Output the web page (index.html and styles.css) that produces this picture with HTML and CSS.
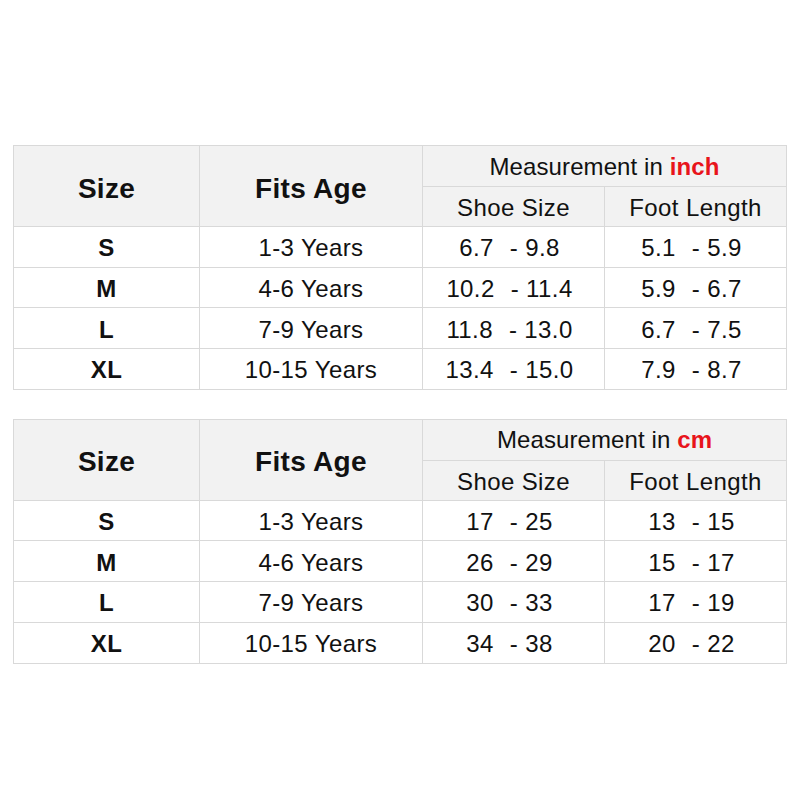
FILE: index.html
```html
<!DOCTYPE html>
<html>
<head>
<meta charset="utf-8">
<link rel="stylesheet" href="styles.css">
</head>
<body>
<div class="page">
  <table class="chart">
    <colgroup><col class="c1"><col class="c2"><col class="c3"><col class="c4"></colgroup>
    <tr class="h1">
      <th rowspan="2" class="big">Size</th>
      <th rowspan="2" class="big">Fits Age</th>
      <th colspan="2" class="meas">Measurement in <b class="red">inch</b></th>
    </tr>
    <tr class="h2"><th class="sub">Shoe Size</th><th class="sub">Foot Length</th></tr>
    <tr><td class="sz">S</td><td>1-3 Years</td><td class="num">6.7<span class="dash">-</span>9.8</td><td class="num">5.1<span class="dash">-</span>5.9</td></tr>
    <tr><td class="sz">M</td><td>4-6 Years</td><td class="num">10.2<span class="dash">-</span>11.4</td><td class="num">5.9<span class="dash">-</span>6.7</td></tr>
    <tr><td class="sz">L</td><td>7-9 Years</td><td class="num">11.8<span class="dash">-</span>13.0</td><td class="num">6.7<span class="dash">-</span>7.5</td></tr>
    <tr><td class="sz">XL</td><td>10-15 Years</td><td class="num">13.4<span class="dash">-</span>15.0</td><td class="num">7.9<span class="dash">-</span>8.7</td></tr>
  </table>
  <table class="chart">
    <colgroup><col class="c1"><col class="c2"><col class="c3"><col class="c4"></colgroup>
    <tr class="h1">
      <th rowspan="2" class="big">Size</th>
      <th rowspan="2" class="big">Fits Age</th>
      <th colspan="2" class="meas">Measurement in <b class="red">cm</b></th>
    </tr>
    <tr class="h2"><th class="sub">Shoe Size</th><th class="sub">Foot Length</th></tr>
    <tr><td class="sz">S</td><td>1-3 Years</td><td class="num">17<span class="dash">-</span>25</td><td class="num">13<span class="dash">-</span>15</td></tr>
    <tr><td class="sz">M</td><td>4-6 Years</td><td class="num">26<span class="dash">-</span>29</td><td class="num">15<span class="dash">-</span>17</td></tr>
    <tr><td class="sz">L</td><td>7-9 Years</td><td class="num">30<span class="dash">-</span>33</td><td class="num">17<span class="dash">-</span>19</td></tr>
    <tr><td class="sz">XL</td><td>10-15 Years</td><td class="num">34<span class="dash">-</span>38</td><td class="num">20<span class="dash">-</span>22</td></tr>
  </table>
</div>
</body>
</html>
```
FILE: styles.css
```css
html, body {
  margin: 0;
  padding: 0;
  background: #ffffff;
}
.page {
  padding: 145px 0 0 13px;
  display: flex;
  flex-direction: column;
  gap: 29px;
  font-family: "Liberation Sans", Arial, sans-serif;
  color: #111;
}
.chart {
  border-collapse: collapse;
  table-layout: fixed;
  width: 774px;
}
.c1 { width: 186px; }
.c2 { width: 223px; }
.c3 { width: 182px; }
.c4 { width: 182px; }
.chart th, .chart td {
  border: 1.5px solid #d9d9d9;
  padding: 3px 0 0 0;
  text-align: center;
  vertical-align: middle;
  font-size: 24px;
  letter-spacing: 0.4px;
  font-weight: normal;
  white-space: nowrap;
}
.chart th {
  background: #f2f2f2;
}
.chart .h1 { height: 41px; }
.chart .h2 { height: 40px; }
.chart tr { height: 40.7px; }
.chart .meas {
  padding-top: 1px;
  letter-spacing: 0.1px;
}
.chart .big {
  font-weight: bold;
  font-size: 28px;
  letter-spacing: 0.3px;
  padding-top: 5px;
}
.chart .sz {
  font-weight: bold;
}
.chart .num {
  padding-right: 8px;
}
.dash {
  margin: 0 7px 0 16px;
}
.red {
  color: #e8141b;
  font-weight: bold;
}
```
